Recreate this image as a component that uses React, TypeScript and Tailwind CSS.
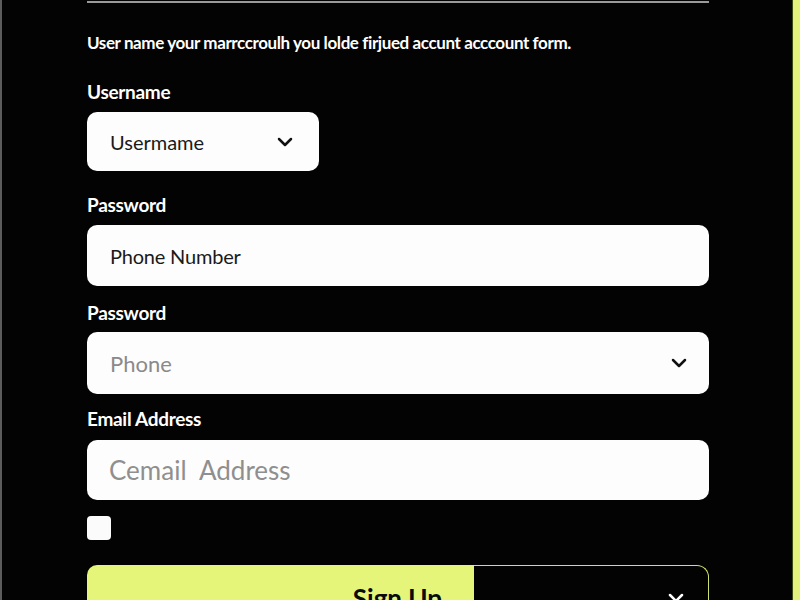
import { ChevronDown } from "lucide-react";

function Label({ text, className }: { text: string; className?: string }) {
  return (
    <div className={`text-[19px] leading-6 font-bold text-white tracking-[-0.3px] ${className ?? ""}`}>
      {text}
    </div>
  );
}

export default function App() {
  return (
    <div className="flex h-[600px] w-[800px] overflow-hidden bg-[#030303] font-['Lato',sans-serif]">
      <div className="w-[2px] bg-[#5c5c5c]" />
      <div className="flex-1 pl-[85px] pr-[83px]">
        <div className="mt-[1px] h-[2px] bg-[#9a9a9a]" />

        <p className="mt-[30px] text-[17px] leading-5 font-bold text-white tracking-[-0.4px]">
          User name your marrccroulh you lolde firjued accunt acccount form.
        </p>

        <Label text="Username" className="mt-[27px]" />
        <div className="mt-2 flex h-[59px] w-[232px] items-center justify-between rounded-[10px] bg-[#fdfdfd] pl-[23px] pr-[22px]">
          <span className="text-[20px] text-[#1a1a1a]">Usermame</span>
          <ChevronDown className="h-6 w-6 text-[#111]" strokeWidth={2.5} />
        </div>

        <Label text="Password" className="mt-[22px]" />
        <div className="mt-2 flex h-[61px] items-center rounded-[10px] bg-[#fdfdfd] pl-[23px]">
          <span className="text-[20px] text-[#1a1a1a] tracking-[-0.2px]">Phone Number</span>
        </div>

        <Label text="Password" className="mt-[15px]" />
        <div className="mt-[7px] flex h-[62px] items-center justify-between rounded-[10px] bg-[#fdfdfd] pl-[23px] pr-[18px]">
          <span className="text-[22px] text-[#8a8a8a]">Phone</span>
          <ChevronDown className="h-6 w-6 text-[#111]" strokeWidth={2.5} />
        </div>

        <Label text="Email Address" className="mt-[13px]" />
        <div className="mt-[9px] flex h-[60px] items-center rounded-[10px] bg-[#fdfdfd] pl-[22px]">
          <span className="text-[26px] text-[#8f8f8f] whitespace-pre">Cemail  Address</span>
        </div>

        <div className="mt-4 h-6 w-6 rounded-[4px] bg-[#fbfbfb]" />

        <div className="mt-[25px] flex h-[60px]">
          <div className="flex w-[387px] items-start justify-end rounded-tl-[10px] bg-[#e4f57a] pr-[32px] pt-[14px]">
            <span className="text-[26px] font-bold text-[#0a0a0a]">Sign Up</span>
          </div>
          <div className="flex flex-1 items-start justify-end rounded-tr-[12px] border-t border-r border-[#cfe16c] pr-[20px] pt-[20px]">
            <ChevronDown className="h-6 w-6 text-white" strokeWidth={2.5} />
          </div>
        </div>
      </div>
      <div className="w-[1px] bg-[#3b4a12]" />
      <div className="w-[7px] bg-[#e2f07c]" />
    </div>
  );
}
